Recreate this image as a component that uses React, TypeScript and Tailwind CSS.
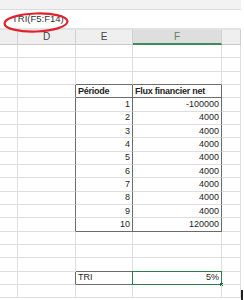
import React from 'react';

type Cell = { text?: string; bold?: boolean; align?: 'left' | 'right' };

const COLS = ['C', 'D', 'E', 'F', 'G'];
const FLUX = ['-100000', '4000', '4000', '4000', '4000', '4000', '4000', '4000', '4000', '120000'];

// Row numbers 1..19, the table sits in E4:F14 and the result in E18:F18
const ROWS = Array.from({ length: 19 }, (_, i) => i + 1);

const cellFor = (row: number, col: string): Cell => {
  if (row === 4 && col === 'E') return { text: 'Période', bold: true, align: 'left' };
  if (row === 4 && col === 'F') return { text: 'Flux financier net', bold: true, align: 'left' };
  if (row >= 5 && row <= 14 && col === 'E') return { text: String(row - 4), align: 'right' };
  if (row >= 5 && row <= 14 && col === 'F') return { text: FLUX[row - 5], align: 'right' };
  if (row === 18 && col === 'E') return { text: 'TRI', align: 'left' };
  if (row === 18 && col === 'F') return { text: '5%', align: 'right' };
  return {};
};

const inTable = (row: number) => row >= 4 && row <= 14;

// Border colours: light gridlines, darker where a cell edge belongs to a bordered range
const rightBorder = (row: number, col: string) => {
  if (col === 'D' && (inTable(row) || row === 18)) return 'border-r-[#6b6b6b]';
  if (col === 'E' && (inTable(row) || row === 18)) return 'border-r-[#6b6b6b]';
  if (col === 'F' && inTable(row)) return 'border-r-[#6b6b6b]';
  return 'border-r-[#dedede]';
};

const bottomBorder = (row: number, col: string) => {
  const tableCol = col === 'E' || col === 'F';
  if (tableCol && (row === 3 || row === 4 || row === 14)) return 'border-b-[#6b6b6b]';
  if (col === 'E' && (row === 17 || row === 18)) return 'border-b-[#6b6b6b]';
  return 'border-b-[#dedede]';
};

const GridCell: React.FC<{ row: number; col: string }> = ({ row, col }) => {
  const cell = cellFor(row, col);
  const selected = row === 18 && col === 'F';
  return (
    <div
      className={`relative flex items-center border-r border-b ${rightBorder(row, col)} ${bottomBorder(row, col)} px-[2px] ${
        cell.align === 'right' ? 'justify-end' : 'justify-start'
      }`}
    >
      {cell.text && (
        <span
          className={`text-[9px] leading-none text-[#1e1e1e] whitespace-nowrap ${
            cell.bold ? 'font-bold tracking-[-0.25px]' : ''
          }`}
        >
          {cell.text}
        </span>
      )}
      {selected && (
        <>
          <div className="absolute -left-[1px] -top-[1px] -right-[1px] -bottom-[1px] border-[1.5px] border-[#2e7d4f]" />
          <div className="absolute -right-[2px] -bottom-[2px] w-[3px] h-[3px] bg-[#1f6b40]" />
        </>
      )}
    </div>
  );
};

const App: React.FC = () => {
  return (
    <div
      className="relative w-[244px] h-[300px] bg-white overflow-hidden"
      style={{ fontFamily: '"Liberation Sans", Arial, sans-serif' }}
    >
      <div className="w-[241px]">
        {/* ribbon edge */}
        <div className="h-[10px] bg-[#f2f2f2] border-b border-[#dcdcdc]" />

        {/* formula bar */}
        <div className="h-[20px] flex items-center pl-[12px] bg-white border-b-[2px] border-[#e3e3e3]">
          <span className="text-[9.5px] leading-none text-[#333]">TRI(F5:F14)</span>
        </div>

        {/* column headers */}
        <div className="grid grid-cols-[18px_58px_57px_89px_19px] h-[15px] bg-[#efefef]">
          {COLS.map((c) => (
            <div
              key={c}
              className={`flex items-center justify-center border-r border-[#d0d0d0] ${
                c === 'F' ? 'bg-[#dedede] border-b-[2px] border-b-[#3d8a5c]' : 'border-b border-b-[#c8c8c8]'
              }`}
            >
              <span className={`text-[10px] leading-none ${c === 'F' ? 'text-[#5d7f6a]' : 'text-[#444]'}`}>
                {c === 'C' || c === 'G' ? '' : c}
              </span>
            </div>
          ))}
        </div>

        {/* cells */}
        <div className="grid grid-cols-[18px_58px_57px_89px_19px] auto-rows-[13.333px]">
          {ROWS.map((r) => COLS.map((c) => <GridCell key={`${c}${r}`} row={r} col={c} />))}
        </div>
      </div>

      {/* hand-drawn highlight around the formula */}
      <svg className="absolute left-0 top-[9px]" width="74" height="28" viewBox="0 0 74 28">
        <ellipse
          cx="36"
          cy="13.5"
          rx="31.5"
          ry="9"
          fill="none"
          stroke="#e3212b"
          strokeWidth="2.2"
          transform="rotate(-2 36 13.5)"
        />
      </svg>

      {/* mouse pointer edge */}
      <div className="absolute left-[241px] top-[290px] w-[2px] h-[10px] bg-[#222]" />
    </div>
  );
};

export default App;
